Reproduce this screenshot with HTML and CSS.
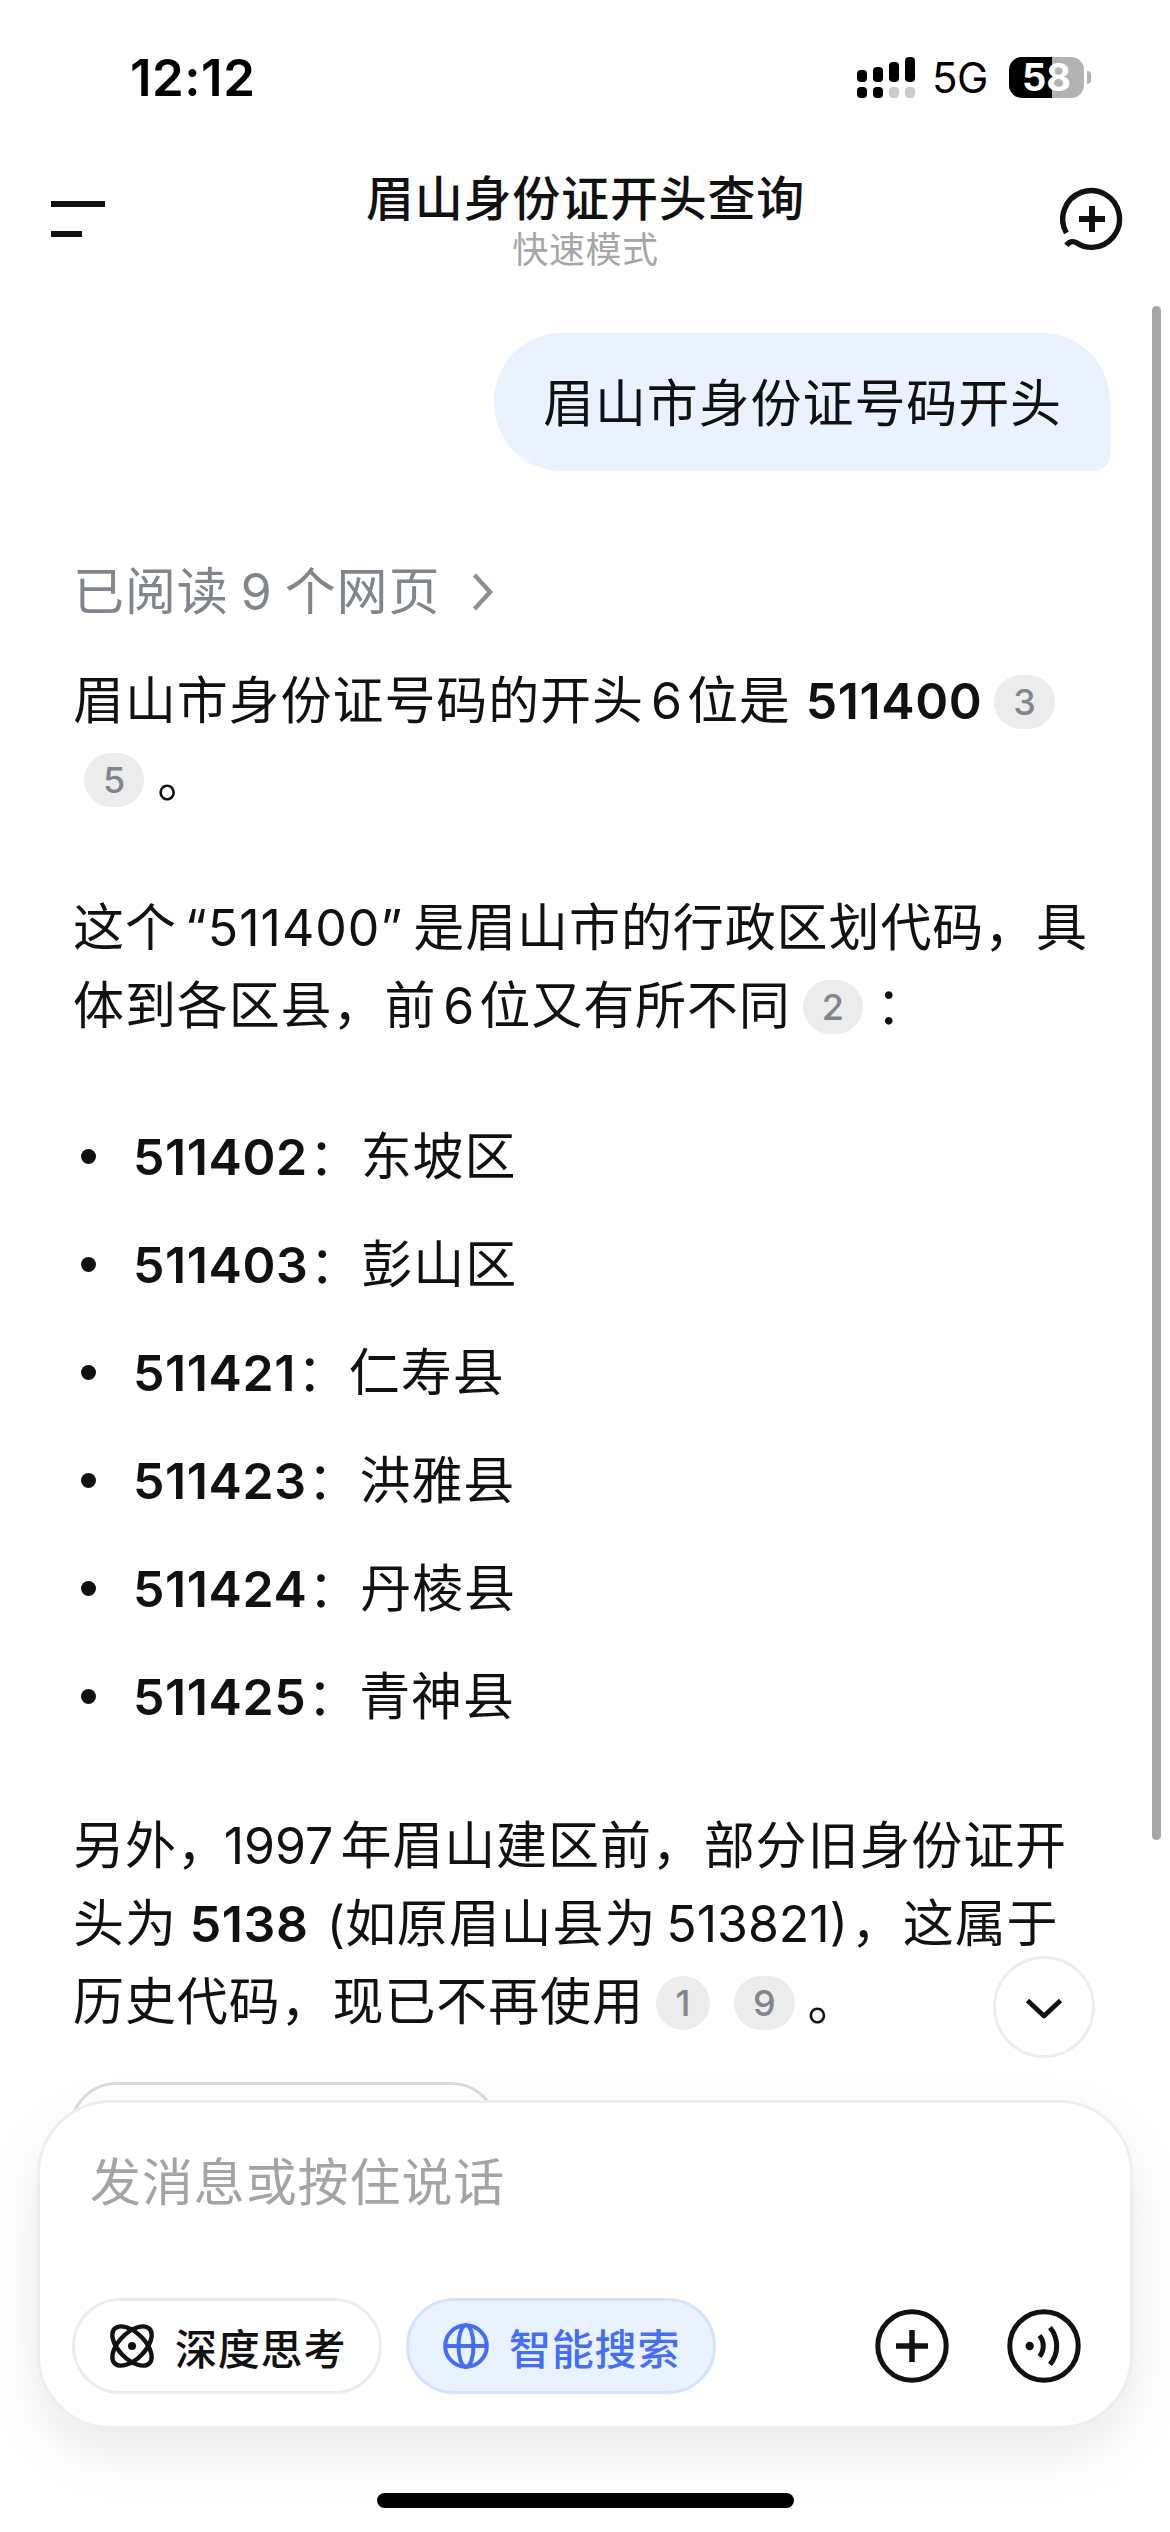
FILE: index.html
```html
<!DOCTYPE html>
<html lang="zh-CN">
<head>
  <meta charset="UTF-8">
  <meta name="viewport" content="width=device-width, initial-scale=1.0">
  <title>眉山身份证开头查询</title>
  <link rel="stylesheet" href="styles.css">
</head>
<body>
  <div class="status-bar">
    <span class="time">12:12</span>
    <div class="status-right">
      <svg class="signal" width="58" height="41" viewBox="0 0 58 41">
        <rect x="0" y="13" width="10" height="12" rx="4"/>
        <rect x="16" y="10" width="10" height="15" rx="4"/>
        <rect x="32" y="5" width="10" height="20" rx="4"/>
        <rect x="48" y="0" width="10" height="25" rx="4"/>
        <rect x="0" y="30" width="10" height="11" rx="4"/>
        <rect x="16" y="30" width="10" height="11" rx="4"/>
        <rect x="32" y="30" width="10" height="11" rx="4" fill="#ccc"/>
        <rect x="48" y="30" width="10" height="11" rx="4" fill="#ccc"/>
      </svg>
      <span class="network">5G</span>
      <div class="battery">58</div>
      <span class="battery-cap"></span>
    </div>
  </div>

  <header class="header">
    <button class="icon-button menu-button" aria-label="菜单">
      <span class="bar"></span>
      <span class="bar short"></span>
    </button>
    <div class="titles">
      <h1>眉山身份证开头查询</h1>
      <p class="mode">快速模式</p>
    </div>
    <button class="icon-button" aria-label="新对话">
      <svg width="64" height="64" viewBox="0 0 64 64" fill="none" stroke="#111" stroke-width="5.4">
        <path d="M6.4 46A28.4 28.4 0 1 1 32 60.4C25 60.4 20.5 58.5 17 56C13.5 53.6 9.5 54.2 6.3 58.2"/>
        <path d="M32 19v26M19 32h26" stroke-width="6"/>
      </svg>
    </button>
  </header>

  <main class="chat">
    <div class="bubble">眉山市身份证号码开头</div>

    <div class="sources">
      <span>已阅读<span class="num read-count">9</span>个网页</span>
      <svg width="22" height="38" viewBox="0 0 22 38" fill="none" stroke="#8b8e94" stroke-width="4.4">
        <path d="M2.5 2L18 19L2.5 36"/>
      </svg>
    </div>

    <article class="answer">
      <p>眉山市身份证号码的开头<span class="num single">6</span>位是<b class="num strong">511400</b><span class="ref">3</span><br><span class="ref first">5</span><span class="stop">。</span></p>
      <p>这个<span class="num quote">“511400”</span>是眉山市的行政区划代码，具<br>体到各区县，前<span class="num single">6</span>位又有所不同<span class="ref">2</span><span class="stop">：</span></p>
      <ul>
        <li><b class="num">511402</b>：东坡区</li>
        <li><b class="num">511403</b>：彭山区</li>
        <li><b class="num">511421</b>：仁寿县</li>
        <li><b class="num">511423</b>：洪雅县</li>
        <li><b class="num">511424</b>：丹棱县</li>
        <li><b class="num">511425</b>：青神县</li>
      </ul>
      <p>另外，<span class="num year">1997</span>年眉山建区前，部分旧身份证开<br>头为<b class="num strong short">5138</b><span class="num paren">(</span>如原眉山县为<span class="num code">513821)</span>，这属于<br>历史代码，现已不再使用<span class="ref">1</span><span class="ref">9</span><span class="stop">。</span></p>
      <div class="source-chip"></div>
    </article>
  </main>

  <div class="scrollbar"></div>

  <button class="scroll-down" aria-label="滚动到底部">
    <svg width="40" height="24" viewBox="0 0 40 24" fill="none" stroke="#111" stroke-width="4.8" stroke-linejoin="round">
      <path d="M3.5 3.5L20 19L36.5 3.5"/>
    </svg>
  </button>

  <div class="composer">
    <div class="placeholder">发消息或按住说话</div>
    <div class="tools">
      <button class="pill">
        <svg width="46" height="46" viewBox="0 0 46 46" fill="none" stroke="#111" stroke-width="4.4">
          <ellipse cx="23" cy="23" rx="24.5" ry="13" transform="rotate(45 23 23)"/>
          <ellipse cx="23" cy="23" rx="24.5" ry="13" transform="rotate(-45 23 23)"/>
          <circle cx="23" cy="23" r="4" fill="#111" stroke="none"/>
        </svg>
        深度思考
      </button>
      <button class="pill active">
        <svg width="46" height="46" viewBox="0 0 46 46" fill="none" stroke="#416eff" stroke-width="4">
          <circle cx="23" cy="23" r="20.8"/>
          <ellipse cx="23" cy="23" rx="7.5" ry="20.8"/>
          <path d="M2 23h42"/>
        </svg>
        智能搜索
      </button>
      <div class="actions">
        <svg width="74" height="74" viewBox="0 0 74 74" fill="none" stroke="#111" stroke-width="5">
          <circle cx="37" cy="37" r="34.2"/>
          <path d="M37 21v32M21 37h32" stroke-width="5.5"/>
        </svg>
        <svg width="74" height="74" viewBox="0 0 74 74" fill="none" stroke="#111" stroke-width="5">
          <circle cx="37" cy="37" r="34.2"/>
          <circle cx="22.7" cy="37" r="4.2" fill="#111" stroke="none"/>
          <path d="M32.5 26.5a16.5 16.5 0 0 1 0 21M43 18.5a29 29 0 0 1 0 37"/>
        </svg>
      </div>
    </div>
  </div>

  <div class="home-indicator"></div>
</body>
</html>
```
FILE: styles.css
```css
* {
  margin: 0;
  padding: 0;
  box-sizing: border-box;
}

body {
  position: relative;
  width: 1170px;
  height: 2532px;
  overflow: hidden;
  background-color: #fff;
  color: #111;
  font-family: Inter, "Noto Sans CJK SC", sans-serif;
}

button {
  border: none;
  background: none;
  font-family: inherit;
  color: inherit;
}

svg {
  display: block;
  flex: none;
}

/* Status bar */
.status-bar {
  display: flex;
  justify-content: space-between;
  align-items: center;
  height: 155px;
  padding: 0 79px 0 130px;
  color: #000;
}

.time {
  font-size: 51px;
  font-weight: 600;
  letter-spacing: 0.5px;
}

.status-right {
  display: flex;
  align-items: center;
}

.network {
  width: 54px;
  margin-left: 17px;
  font-size: 42px;
  letter-spacing: -0.5px;
  white-space: nowrap;
}

.battery {
  width: 75px;
  height: 41px;
  margin-left: 23px;
  border-radius: 13px;
  background: linear-gradient(to right, #000 43px, #b2b2b2 43px);
  color: #fff;
  font-size: 38px;
  font-weight: 700;
  line-height: 41px;
  text-align: center;
}

.battery-cap {
  width: 4px;
  height: 13px;
  margin-left: 3px;
  border-radius: 0 5px 5px 0;
  background-color: #b2b2b2;
}

/* Header */
.header {
  display: flex;
  justify-content: space-between;
  align-items: flex-start;
  height: 151px;
  padding: 0 46px 0 51px;
}

.icon-button {
  width: 64px;
  padding-top: 32px;
}

.menu-button {
  display: flex;
  flex-direction: column;
  gap: 24px;
  padding-top: 46px;
}

.bar {
  width: 54px;
  height: 6px;
  background-color: #111;
}

.bar.short {
  width: 31px;
}

.titles {
  padding: 14px 4px 0 0;
  text-align: center;
}

h1 {
  font-size: 48px;
  font-weight: 500;
  line-height: 60px;
  letter-spacing: 0.8px;
}

.mode {
  font-size: 36px;
  line-height: 42px;
  letter-spacing: 0.6px;
  color: #a6a6a6;
}

/* Conversation */
.chat {
  display: flex;
  flex-direction: column;
  padding: 27px 60px 0 73px;
  font-size: 51px;
  line-height: 78px;
  letter-spacing: 0.9px;
  white-space: nowrap;
}

.bubble {
  align-self: flex-end;
  width: 616px;
  height: 138px;
  padding: 32px 0 0 49px;
  border-radius: 68px 68px 16px 68px;
  background-color: #ebf2ff;
}

.sources {
  display: flex;
  align-items: center;
  gap: 32px;
  margin: 82px 0 31px;
  color: #81858c;
}

.num {
  font-size: 50px;
  letter-spacing: 0;
}

.read-count {
  margin: 0 13px 0 12px;
}

.answer p + p {
  margin-top: 71px;
}

b {
  font-weight: 600;
}

b.num {
  letter-spacing: 0.6px;
}

.single {
  margin: 0 5px 0 7px;
}

.strong {
  margin: 0 0 0 15px;
}

.strong.short {
  margin-left: 13px;
}

.quote {
  margin: 0 10px 0 8px;
  letter-spacing: 1px;
}

.year {
  margin: 0 7px 0 -5px;
}

.paren {
  margin-left: 18px;
}

.code {
  margin: 0 3px 0 10px;
}

.ref {
  display: inline-flex;
  justify-content: center;
  align-items: center;
  position: relative;
  top: -3px;
  min-width: 54px;
  height: 54px;
  margin: 0 12px;
  padding: 0 19px;
  border-radius: 27px;
  background-color: #ececec;
  color: #81858c;
  font-size: 36px;
  font-weight: 500;
  letter-spacing: 0;
  line-height: 54px;
  vertical-align: middle;
}

.ref.first {
  margin-left: 11px;
}

.stop {
  margin-left: 1px;
}

/* District list */
ul {
  display: flex;
  flex-direction: column;
  gap: 30px;
  margin: 73px 0 71px;
  list-style: none;
}

li {
  display: flex;
  align-items: center;
}

li::before {
  content: "";
  width: 15px;
  height: 15px;
  margin: -2px 37px 0 8px;
  border-radius: 50%;
  background-color: #111;
}

li .num {
  margin-right: 1px;
}

.source-chip {
  width: 430px;
  height: 96px;
  margin: 41px 0 0 -4px;
  border: 3px solid #dcdcdc;
  border-radius: 48px;
}

/* Overlays */
.scrollbar {
  position: absolute;
  top: 306px;
  right: 9px;
  width: 9px;
  height: 1534px;
  border-radius: 5px;
  background-color: #a6a6a6;
}

.scroll-down {
  position: absolute;
  top: 1956px;
  right: 75px;
  display: flex;
  justify-content: center;
  align-items: center;
  width: 102px;
  height: 102px;
  padding-top: 4px;
  border: 3px solid #ececec;
  border-radius: 50%;
  background-color: #fff;
}

.composer {
  position: absolute;
  right: 37px;
  bottom: 103px;
  left: 37px;
  height: 329px;
  padding: 41px 49px 0 32px;
  border: 3px solid #eee;
  border-radius: 74px;
  background-color: #fff;
  box-shadow: 0 24px 60px rgba(0, 0, 0, 0.09);
}

.placeholder {
  padding-left: 18px;
  font-size: 51px;
  line-height: 78px;
  letter-spacing: 0.9px;
  color: #a3a4a6;
}

.tools {
  display: flex;
  align-items: center;
  gap: 24px;
  margin-top: 76px;
}

.pill {
  display: flex;
  align-items: center;
  gap: 20px;
  width: 310px;
  height: 96px;
  padding-left: 34px;
  border: 3px solid #ececec;
  border-radius: 48px;
  font-size: 42px;
  font-weight: 500;
  letter-spacing: 0.8px;
  white-space: nowrap;
}

.pill.active {
  border-color: #d3e3ff;
  background-color: #ebf2ff;
  color: #416eff;
}

.actions {
  display: flex;
  gap: 58px;
  margin-left: auto;
}

.home-indicator {
  position: absolute;
  bottom: 24px;
  left: 377px;
  width: 417px;
  height: 15px;
  border-radius: 8px;
  background-color: #000;
}
```
